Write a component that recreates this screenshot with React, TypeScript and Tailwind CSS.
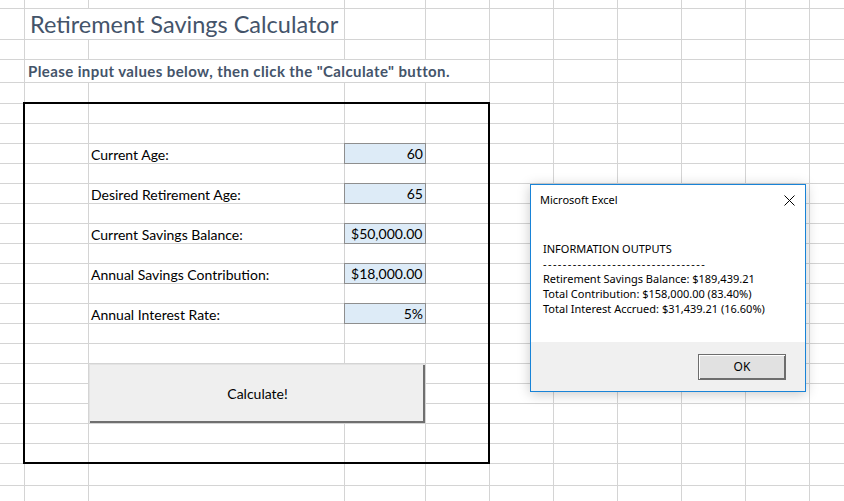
import React from 'react';

const CELL_FONT = "font-['Lato','Liberation_Sans',sans-serif]";
const DIALOG_FONT = "font-['Noto_Sans','Open_Sans',sans-serif]";

const fields = [
  { row: 'row-start-8', label: 'Current Age:', value: '60' },
  { row: 'row-start-10', label: 'Desired Retirement Age:', value: '65' },
  { row: 'row-start-12', label: 'Current Savings Balance:', money: '50,000.00' },
  { row: 'row-start-14', label: 'Annual Savings Contribution:', money: '18,000.00' },
  { row: 'row-start-16', label: 'Annual Interest Rate:', value: '5%' },
];

const sheetGrid =
  'grid grid-cols-[25px_64px_256px_81px_64px_64px_64px_64px_64px_64px_64px] grid-rows-[9px_31px_20px_23px_21px_repeat(18,20px)_22px_20px]';

function CloseIcon() {
  return (
    <svg width="11" height="11" viewBox="0 0 11 11" className="block">
      <path d="M0.5 0.5 L10.5 10.5 M10.5 0.5 L0.5 10.5" stroke="#000" strokeWidth="1" />
    </svg>
  );
}

function MessageBox() {
  return (
    <div
      className={`absolute left-[530px] top-[184px] w-[276px] h-[208px] flex flex-col bg-white border border-[#1883d7] shadow-[0_2px_12px_rgba(0,0,0,0.22)] text-[11px] text-black ${DIALOG_FONT}`}
    >
      <div className="h-[30px] flex items-center justify-between pl-[9px] pr-[10px]">
        <span>Microsoft Excel</span>
        <CloseIcon />
      </div>
      <div className="flex-1 pl-[12px] pt-[26px] leading-[15px] whitespace-nowrap">
        <div>INFORMATION OUTPUTS</div>
        <div className="tracking-[1.4px]">---------------------------------</div>
        <div>Retirement Savings Balance: $189,439.21</div>
        <div>Total Contribution: $158,000.00 (83.40%)</div>
        <div>Total Interest Accrued: $31,439.21 (16.60%)</div>
      </div>
      <div className="h-[49px] bg-[#f0f0f0] flex justify-end items-start pt-[12px] pr-[19px]">
        <button className="w-[88px] h-[26px] bg-[#e1e1e1] border border-[#6d6d6d] shadow-[inset_1px_1px_0_#ffffff,inset_-1px_-1px_0_#6d6d6d] text-[12px]">
          OK
        </button>
      </div>
    </div>
  );
}

export default function App() {
  return (
    <div className="relative w-[844px] h-[501px] overflow-hidden bg-white">
      <div className="grid">
        {/* gridlines */}
        <div className={`${sheetGrid} col-start-1 row-start-1`}>
          {Array.from({ length: 275 }).map((_, i) => (
            <div key={i} className="border-r border-b border-[#d4d4d4]" />
          ))}
        </div>

        {/* cell contents */}
        <div className={`${sheetGrid} col-start-1 row-start-1 ${CELL_FONT} text-black`}>
          <div className="col-start-2 col-span-2 row-start-2 mr-px mb-px bg-white flex items-end pl-[5px] pb-px">
            <span className="text-[23.5px] leading-[28px] font-normal text-[#44546a] whitespace-nowrap">
              Retirement Savings Calculator
            </span>
          </div>
          <div className="col-start-2 col-span-4 row-start-4 mr-px mb-px bg-white flex items-end pl-[3px] pb-[2px]">
            <span className="text-[15px] leading-[18px] font-bold tracking-[0.4px] text-[#44546a] whitespace-nowrap">
              Please input values below, then click the "Calculate" button.
            </span>
          </div>

          {fields.map((f) => (
            <React.Fragment key={f.label}>
              <div className={`col-start-3 ${f.row} flex items-end pl-[2px] pb-px text-[14px] leading-[17px] whitespace-nowrap`}>
                {f.label}
              </div>
              <div
                className={`col-start-4 ${f.row} -ml-px -mt-px border border-[#8e8e8e] bg-[#ddebf7] flex items-end pb-px text-[14px] leading-[17px] ${
                  f.money ? 'justify-between pl-[6px] pr-[7px]' : 'justify-end pr-[2px]'
                }`}
              >
                {f.money ? (
                  <>
                    <span>$</span>
                    <span>{f.money}</span>
                  </>
                ) : (
                  <span>{f.value}</span>
                )}
              </div>
            </React.Fragment>
          ))}

          <button className="col-start-3 col-span-2 row-start-19 row-span-3 mr-px mb-px bg-[#efefef] border-t border-l border-[#e3e3e3] shadow-[inset_-2px_-2px_0_#6f6f6f] flex items-center justify-center pb-[2px] text-[14px]">
            Calculate!
          </button>

          <div className="col-start-2 col-span-4 row-start-6 row-span-18 -ml-[2px] -mt-[2px] border-2 border-black pointer-events-none" />
        </div>
      </div>

      <MessageBox />
    </div>
  );
}
